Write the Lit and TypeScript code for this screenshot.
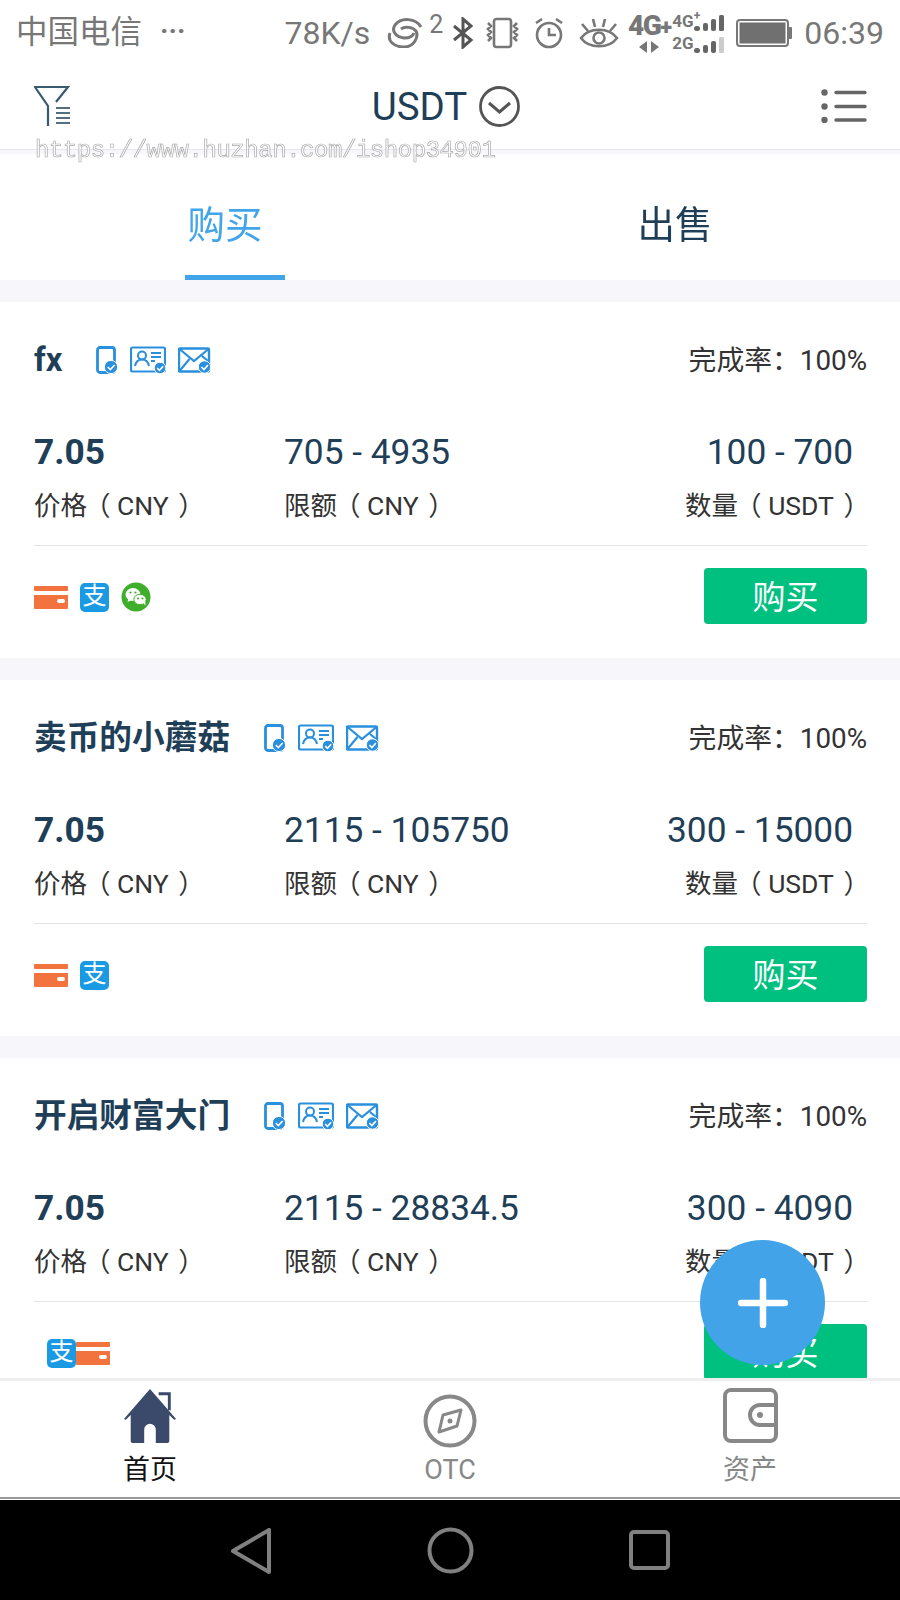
import { LitElement, html, css, svg } from "lit";
import { customElement } from "lit/decorators.js";

const check = (cx: number, cy: number, r: number) => svg`
  <circle cx=${cx} cy=${cy} r=${r} fill="#2a8fdc" stroke="#fff" stroke-width="1"/>
  <path d="M${cx - r * 0.5} ${cy}l${r * 0.4} ${r * 0.4} ${r * 0.65} -${r * 0.7}" fill="none" stroke="#fff" stroke-width="1.6"/>`;

const phoneIcon = html`<svg width="22" height="28" viewBox="0 0 22 28"><rect x="1.5" y="1.5" width="17" height="25" rx="2.5" fill="none" stroke="#2a8fdc" stroke-width="2.8"/>${check(15, 21, 6.6)}</svg>`;
const idIcon = html`<svg width="36" height="28" viewBox="0 0 36 28"><rect x="1" y="1.5" width="34" height="24" rx="1.5" fill="none" stroke="#2a8fdc" stroke-width="2.2"/><circle cx="12" cy="9.5" r="4" fill="none" stroke="#2a8fdc" stroke-width="2"/><path d="M5 20c1-5 4-6.500 7-6.500s6 1.500 7 6.500M21 7h10M21 11h10M21 15h4" fill="none" stroke="#2a8fdc" stroke-width="2"/>${check(30, 22, 5.8)}</svg>`;
const mailIcon = html`<svg width="34" height="27" viewBox="0 0 34 27"><rect x="1" y="1.500" width="30" height="23" rx="1" fill="none" stroke="#2a8fdc" stroke-width="2.400"/><path d="M1.500 2l14.500 12 14.500-12M1.500 24l10-12M30 14l-6-5" fill="none" stroke="#2a8fdc" stroke-width="2.200"/>${check(26.500, 20, 6.200)}</svg>`;

const bankIcon = html`<svg class="pay-card" width="34" height="23" viewBox="0 0 34 23"><rect y="0" width="34" height="5" rx="1" fill="#f2733d"/><path d="M0 9h34v13a1 1 0 0 1-1 1H1a1 1 0 0 1-1-1z" fill="#f2733d"/><rect x="23" y="13" width="8" height="4" rx="2" fill="#fff"/></svg>`;
const aliIcon = html`<span class="ali">支</span>`;
const wechatIcon = html`<svg width="30" height="30" viewBox="0 0 30 30"><circle cx="15" cy="15" r="14.500" fill="#3fae2a"/><ellipse cx="12" cy="12.500" rx="7.500" ry="6.500" fill="#fff"/><path d="M7.500 16l-1 4 4-2z" fill="#fff"/><ellipse cx="19" cy="17.500" rx="6.200" ry="5.200" fill="#fff" stroke="#3fae2a" stroke-width="1"/><path d="M22 21l2.500 2.500-.2-4z" fill="#fff"/><circle cx="9.500" cy="10.500" r="1.100" fill="#3fae2a"/><circle cx="14.500" cy="10.500" r="1.100" fill="#3fae2a"/><circle cx="17" cy="16.500" r="1" fill="#3fae2a"/><circle cx="21.500" cy="16.500" r="1" fill="#3fae2a"/></svg>`;

const bars = (last: string) => html`<svg width="30" height="16" viewBox="0 0 30 16" fill="#666"><rect y="11" width="6" height="5" rx="2.500"/><rect x="9" y="8" width="5" height="8" rx="2"/><rect x="17" y="4" width="5" height="12" rx="2"/><rect x="25" width="5" height="16" rx="1.500" fill=${last}/></svg>`;

const label = (zh: string, unit: string) =>
  html`${zh}<span class="po">（</span> <span class="unit">${unit}</span> ）`;

interface Offer {
  name: string;
  limit: string;
  qty: string;
  pay: "all" | "two" | "rev";
}
const offers: Offer[] = [
  { name: "fx", limit: "705 - 4935", qty: "100 - 700", pay: "all" },
  { name: "卖币的小蘑菇", limit: "2115 - 105750", qty: "300 - 15000", pay: "two" },
  { name: "开启财富大门", limit: "2115 - 28834.5", qty: "300 - 4090", pay: "rev" },
];

@customElement("app-root")
export class AppRoot extends LitElement {
  static styles = css`
    :host {
      display: block;
      width: 900px;
      height: 1600px;
      font-family: Roboto, "Noto Sans CJK SC", sans-serif;
      background: #fff;
      overflow: hidden;
    }
    .page { position: relative; display: flex; flex-direction: column; width: 900px; height: 1600px; }
    .status { height: 65px; flex: none; display: flex; align-items: center; justify-content: space-between; padding: 0 16px; color: #777; box-sizing: border-box; }
    .st-left { display: flex; align-items: center; gap: 18px; font-size: 31.500px; line-height: 1; }
    .dots { font-size: 28px; font-weight: 700; position: relative; top: -2px; }
    .st-right { display: flex; align-items: center; }
    .speed { font-size: 32px; margin-right: 17px; }
    .sup { font-size: 25px; margin: -16px 9px 0 2px; }
    .clock { font-size: 32px; margin-left: 12px; }
    .m11 { margin-right: 11px; }
    .m13 { margin-right: 13px; }
    .m15 { margin-right: 15px; }
    .m7 { margin-right: 7px; }
    .net { display: flex; flex-direction: column; align-items: center; width: 46px; font-weight: 700; color: #777; line-height: 1; }
    .net b { font-size: 28px; letter-spacing: -1.500px; line-height: 28px; white-space: nowrap; }
    .net i { font-style: normal; font-size: 22px; }
    .net svg { margin-top: -1px; }
    .dual { display: flex; flex-direction: column; gap: 3px; width: 52px; margin-right: 12px; }
    .dual div { display: flex; align-items: flex-end; justify-content: space-between; font-size: 17px; font-weight: 700; line-height: 19px; }
    .dual span { margin-right: -8px; white-space: nowrap; }
    .dual sup { font-size: 12px; line-height: 0; }
    .header { height: 84px; flex: none; display: flex; align-items: center; justify-content: space-between; padding: 0 33px 2px 34px; box-sizing: border-box; position: relative; }
    .title { display: flex; align-items: center; gap: 12px; font-size: 38.500px; color: #1f3f58; }
    .rule { flex: none; height: 5px; border-top: 1px solid #e6e6ee; background: #f7f7fb; box-sizing: border-box; }
    .mark { position: absolute; left: 35px; top: 137px; font: 24px/28px "Liberation Mono", monospace; letter-spacing: -0.450px; color: #fff; -webkit-text-stroke: 0.7px #aaa; white-space: nowrap; will-change: transform; }
    .tabs { flex: none; height: 126px; display: grid; grid-template-columns: 1fr 1fr; }
    .tab { position: relative; display: flex; justify-content: center; padding-top: 43px; font-size: 37.500px; line-height: 56px; color: #1f3f58; box-sizing: border-box; }
    .tab.on { color: #42a5ea; }
    .tab.on::after { content: ""; position: absolute; left: 185px; bottom: 0; width: 100px; height: 5px; background: #42a5ea; }
    .list { flex: 1; min-height: 0; overflow: hidden; background: #f7f7fb; padding-top: 22px; display: flex; flex-direction: column; gap: 22px; }
    .card { flex: none; height: 356px; background: #fff; padding: 0 33px 0 34px; box-sizing: border-box; }
    .top { height: 116px; display: flex; align-items: center; }
    .name { font-size: 32.700px; font-weight: 700; color: #1f3f58; margin-right: 34px; line-height: 1; }
    .verify { display: flex; align-items: center; gap: 12px; }
    .rate { margin-left: auto; font-size: 27.800px; color: #333; position: relative; top: -2px; }
    .stats { height: 128px; display: grid; grid-template-columns: 250px 1fr auto; border-bottom: 1px solid #e4e4e4; box-sizing: border-box; }
    .val { font-size: 35.300px; line-height: 50px; color: #1f3f58; margin-top: 9px; }
    .val.b { font-weight: 700; }
    .lab { font-size: 26.500px; line-height: 40px; color: #333; margin-top: 9px; white-space: nowrap; }
    .po { margin-left: -3px; }
    .unit { margin-right: 3px; }
    .col3 { text-align: right; }
    .col3 .val { padding-right: 14px; }
    .col3 .lab { margin-right: -3px; }
    .foot { display: flex; align-items: flex-start; justify-content: space-between; padding-top: 22px; }
    .pays { display: flex; align-items: center; gap: 12px; height: 56px; margin-top: 1px; }
    .pays.rev { gap: 0; margin-left: 13px; }
    .ali { display: block; width: 29px; height: 29px; border-radius: 5px; background: #1b9ae4; color: #fff; font-size: 24px; line-height: 27px; text-align: center; }
    .btn { width: 163px; height: 56px; border-radius: 4px; background: #00c07f; color: #fff; font-size: 33px; line-height: 60px; text-align: center; }
    .nav { flex: none; height: 119px; border-top: 3px solid #eee; box-sizing: border-box; display: grid; grid-template-columns: repeat(3, 1fr); background: #fff; }
    .item { display: flex; flex-direction: column; align-items: center; color: #888; font-size: 27px; line-height: 34px; }
    .icn { height: 72px; padding-top: 7px; display: flex; align-items: flex-start; box-sizing: border-box; }
    .icn.low { padding-top: 13px; }
    .item.on { color: #111; }
    .home { height: 3px; flex: none; border-top: 2px solid #999; box-sizing: border-box; background: #fff; }
    .sys { flex: none; height: 100px; background: #000; position: relative; }
    .sys svg { position: absolute; }
    .back { left: 231px; top: 28px; }
    .circle { left: 427px; top: 27px; }
    .square { left: 629px; top: 30px; }
    .fab { position: absolute; left: 700px; top: 1240px; width: 125px; height: 125px; border-radius: 50%; background: #42a3e8; display: flex; align-items: center; justify-content: center; }
  `;

  private pays(k: Offer["pay"]) {
    if (k === "all") return html`<div class="pays">${bankIcon}${aliIcon}${wechatIcon}</div>`;
    if (k === "two") return html`<div class="pays">${bankIcon}${aliIcon}</div>`;
    return html`<div class="pays rev">${aliIcon}${bankIcon}</div>`;
  }

  render() {
    return html`<div class="page">
      <div class="status">
        <div class="st-left"><span>中国电信</span><span class="dots">···</span></div>
        <div class="st-right">
          <span class="speed">78K/s</span>
          <svg width="40" height="30" viewBox="0 0 40 30" fill="none" stroke="#777" stroke-width="3"><path d="M34 9C29 0 14-1 8 7c-4 6 1 12 9 13 5 0 9-2 10-5"/><path d="M14 11c4-3 12-2 15 2 3 6-2 16-12 16S0 23 3 15"/></svg>
          <span class="sup">2</span>
          <svg class="m11" width="22" height="32" viewBox="0 0 22 32" fill="none" stroke="#555" stroke-width="3"><path d="M2 9l17 14-8 7V2l8 7L2 23"/></svg>
          <svg class="m13" width="36" height="32" viewBox="0 0 36 32" fill="none" stroke="#777" stroke-width="2.600"><rect x="9" y="2" width="17" height="28" rx="2.500"/><path d="M3 6l3 3-3 3 3 3-3 3 3 3-3 3M32 6l-3 3 3 3-3 3 3 3-3 3 3 3"/></svg>
          <svg class="m15" width="30" height="32" viewBox="0 0 30 32" fill="none" stroke="#777" stroke-width="2.600"><circle cx="15" cy="18" r="12"/><path d="M15 11v7h7M2 6l6-4M28 6l-6-4"/></svg>
          <svg class="m7" width="40" height="34" viewBox="0 0 40 34" fill="none" stroke="#777" stroke-width="2.600"><path d="M2 22c8-11 28-11 36 0-8 11-28 11-36 0z"/><circle cx="20" cy="22" r="5.500"/><path d="M3 8l6 7M14 3l2 8M26 3l-2 8M37 8l-6 7"/></svg>
          <div class="net"><b>4G<i>+</i></b><svg width="22" height="12" viewBox="0 0 22 12" fill="#777"><path d="M9 0v12L1 6zM13 0v12l8-6z"/></svg></div>
          <div class="dual">
            <div><span>4G<sup>+</sup></span>${bars("#666")}</div>
            <div><span>2G</span>${bars("#ccc")}</div>
          </div>
          <svg width="56" height="28" viewBox="0 0 56 28"><rect x="1" y="1" width="51" height="26" rx="3" fill="#fff" stroke="#777" stroke-width="2"/><rect x="3.500" y="3.500" width="46" height="21" fill="#707070"/><rect x="52" y="8" width="4" height="12" rx="1" fill="#777"/></svg>
          <span class="clock">06:39</span>
        </div>
      </div>
      <div class="header">
        <svg width="37" height="41" viewBox="0 0 37 41" fill="none" stroke="#3a5a72" stroke-width="2.200"><path d="M14 40V20L1 1h33L22 16"/><path d="M22 22h14M22 27h14M22 32h14M22 37h14" stroke="#54707f" stroke-width="2"/></svg>
        <div class="title"><span>USDT</span>
          <svg width="41" height="41" viewBox="0 0 41 41" fill="none" stroke="#555"><circle cx="20.500" cy="20.500" r="19" stroke-width="2.800"/><path d="M10 17l10.500 9 10.500-9" stroke-width="3"/></svg>
        </div>
        <svg width="46" height="34" viewBox="0 0 46 34" fill="none" stroke="#666" stroke-width="3.400" stroke-linecap="round"><circle cx="3.500" cy="3.500" r="3.200" fill="#666" stroke="none"/><circle cx="3.500" cy="17.500" r="3.200" fill="#666" stroke="none"/><circle cx="3.500" cy="31" r="3.200" fill="#666" stroke="none"/><path d="M15 3.500h29M15 17.500h29M15 31h29"/></svg>
      </div>
      <div class="rule"></div>
      <div class="mark">https://www.huzhan.com/ishop34901</div>
      <div class="tabs"><div class="tab on">购买</div><div class="tab">出售</div></div>
      <div class="list">
        ${offers.map(o => html`<div class="card">
          <div class="top">
            <span class="name">${o.name}</span>
            <div class="verify">${phoneIcon}${idIcon}${mailIcon}</div>
            <span class="rate">完成率：100%</span>
          </div>
          <div class="stats">
            <div><div class="val b">7.05</div><div class="lab">${label("价格", "CNY")}</div></div>
            <div><div class="val">${o.limit}</div><div class="lab">${label("限额", "CNY")}</div></div>
            <div class="col3"><div class="val">${o.qty}</div><div class="lab">${label("数量", "USDT")}</div></div>
          </div>
          <div class="foot">${this.pays(o.pay)}<div class="btn">购买</div></div>
        </div>`)}
      </div>
      <div class="nav">
        <div class="item on"><div class="icn">
          <svg width="56" height="56" viewBox="0 0 56 58"><path d="M28 1L1 32l2 1 5-5v27a2 2 0 0 0 2 2h12V43a6 6 0 0 1 12 0v14h12a2 2 0 0 0 2-2V28l5 5 2-1L28 1z" fill="#3b4a6b"/><path d="M37 6h11v17" fill="none" stroke="#3b4a6b" stroke-width="3"/></svg>
        </div><span>首页</span></div>
        <div class="item"><div class="icn low">
          <svg width="54" height="54" viewBox="0 0 54 54" fill="none" stroke="#888"><circle cx="27" cy="27" r="24.500" stroke-width="4"/><path d="M38 16l-4 16-18 6 4-17z" stroke-width="3" stroke-linejoin="round"/><circle cx="27" cy="27" r="2.500" fill="#888" stroke="none"/></svg>
        </div><span>OTC</span></div>
        <div class="item"><div class="icn">
          <svg width="55" height="55" viewBox="0 0 55 55" fill="none" stroke="#888" stroke-width="4"><path d="M53 17V8a6 6 0 0 0-6-6H8a6 6 0 0 0-6 6v39a6 6 0 0 0 6 6h39a6 6 0 0 0 6-6V37"/><path d="M53 17H37a10 10 0 0 0 0 20h16z"/><circle cx="37" cy="27" r="3" fill="#888" stroke="none"/></svg>
        </div><span>资产</span></div>
      </div>
      <div class="home"></div>
      <div class="sys">
        <svg class="back" width="40" height="46" viewBox="0 0 40 46" fill="none" stroke="#808080" stroke-width="4" stroke-linejoin="round"><path d="M38 2v42L2 23z"/></svg>
        <svg class="circle" width="47" height="47" viewBox="0 0 47 47" fill="none" stroke="#808080" stroke-width="4"><circle cx="23.500" cy="23.500" r="21"/></svg>
        <svg class="square" width="41" height="40" viewBox="0 0 41 40" fill="none" stroke="#808080" stroke-width="4"><rect x="2" y="2" width="37" height="36" rx="3"/></svg>
      </div>
      <div class="fab"><svg width="50" height="50" viewBox="0 0 50 50" fill="none" stroke="#fff" stroke-width="6.500" stroke-linecap="round"><path d="M25 3v44M3 25h44"/></svg></div>
    </div>`;
  }
}
